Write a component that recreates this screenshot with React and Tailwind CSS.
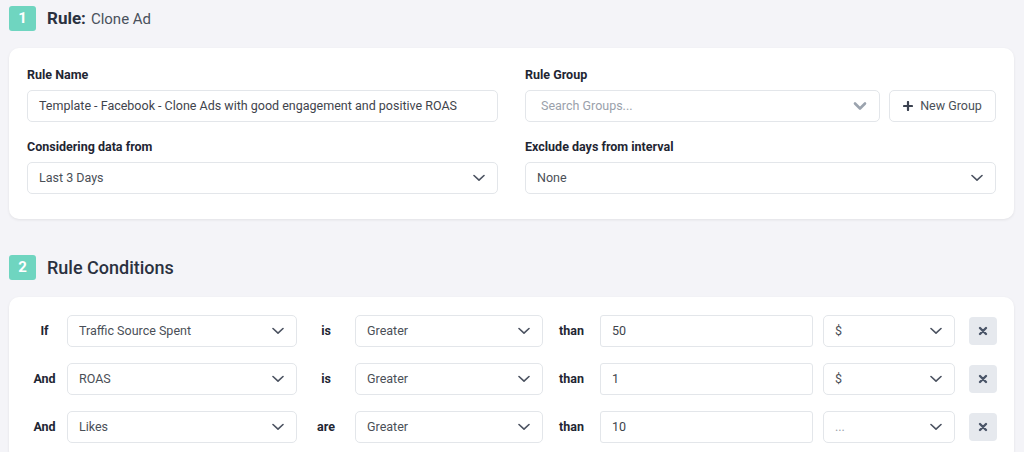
import React from "react";

const conditions = [
    { join: "If", field: "Traffic Source Spent", verb: "is", op: "Greater", value: "50", unit: "$" },
    { join: "And", field: "ROAS", verb: "is", op: "Greater", value: "1", unit: "$" },
    { join: "And", field: "Likes", verb: "are", op: "Greater", value: "10", unit: "..." },
];

function Badge({ n }) {
    return (
        <div className="w-[27px] h-[25px] rounded-[3px] bg-[#6fd5c0] text-white font-bold text-[15px] flex items-center justify-center">
            {n}
        </div>
    );
}

function Chevron({ heavy }) {
    if (heavy) {
        return (
            <svg width="14" height="10" viewBox="0 0 14 10" fill="none">
                <path d="M2 2.5L7 7.5L12 2.5" stroke="#9ba3ae" strokeWidth="2.6" strokeLinecap="round" strokeLinejoin="round" />
            </svg>
        );
    }
    return (
        <svg width="12" height="8" viewBox="0 0 12 8" fill="none">
            <path d="M1 1.5L6 6.2L11 1.5" stroke="#4b5260" strokeWidth="1.6" strokeLinecap="round" strokeLinejoin="round" />
        </svg>
    );
}

function Select({ value, className = "", muted = false, heavy = false }) {
    return (
        <div className={`h-[32px] bg-white border border-[#e3e6ea] rounded-[5px] flex items-center justify-between pl-[11px] pr-[12px] ${className}`}>
            <span className={`text-[12.5px] ${muted ? "text-[#9aa1ab]" : "text-[#4a4f57]"}`}>{value}</span>
            <Chevron heavy={heavy} />
        </div>
    );
}

function Field({ label, children }) {
    return (
        <div>
            <div className="text-[12.5px] font-bold text-[#1f2633] leading-[16px] mb-[7px]">{label}</div>
            {children}
        </div>
    );
}

export default function App() {
    return (
        <div className="min-h-[452px] bg-[#f4f4f8] pl-[9px] pr-[10px] pt-[6px] overflow-hidden" style={{ fontFamily: "Roboto, 'Liberation Sans', sans-serif" }}>
            <div className="flex items-center gap-[11px] h-[25px]">
                <Badge n="1" />
                <div className="text-[#2a3140]">
                    <span className="font-bold text-[17px]">Rule:</span>
                    <span className="text-[15px] text-[#4a515c] ml-[5px]">Clone Ad</span>
                </div>
            </div>

            <div className="mt-[17px] bg-white rounded-[10px] shadow-[0_1px_3px_rgba(0,0,0,0.08)] px-[18px] pt-[19px] pb-[25px] grid grid-cols-2 gap-x-[27px] gap-y-[17px]">
                <Field label="Rule Name">
                    <div className="h-[32px] border border-[#e3e6ea] rounded-[5px] flex items-center px-[11px] text-[12.5px] text-[#3f444c]">
                        Template - Facebook - Clone Ads with good engagement and positive ROAS
                    </div>
                </Field>
                <Field label="Rule Group">
                    <div className="flex gap-[9px]">
                        <Select value="Search Groups..." muted heavy className="flex-1 pl-[15px]" />
                        <button className="h-[32px] w-[107px] border border-[#e3e6ea] rounded-[5px] flex items-center justify-center gap-[7px] text-[12.5px] text-[#4a4f57]">
                            <svg width="10" height="10" viewBox="0 0 10 10">
                                <path d="M5 1V9M1 5H9" stroke="#3b4250" strokeWidth="2.2" strokeLinecap="round" />
                            </svg>
                            New Group
                        </button>
                    </div>
                </Field>
                <Field label="Considering data from">
                    <Select value="Last 3 Days" />
                </Field>
                <Field label="Exclude days from interval">
                    <Select value="None" />
                </Field>
            </div>

            <div className="mt-[36px] flex items-center gap-[11px] h-[25px]">
                <Badge n="2" />
                <span className="text-[18px] font-medium text-[#2a3140]">Rule Conditions</span>
            </div>

            <div className="mt-[17px] bg-white rounded-[10px] shadow-[0_1px_3px_rgba(0,0,0,0.08)] pl-[18px] pr-[17px] pt-[18px] pb-[18px] flex flex-col gap-[16px]">
                {conditions.map((c, i) => (
                    <div key={i} className="flex items-center">
                        <div className="w-[35px] text-center text-[12.5px] font-bold text-[#1f2633]">{c.join}</div>
                        <Select value={c.field} className="ml-[5px] w-[230px]" />
                        <div className="w-[58px] text-center text-[12.5px] font-bold text-[#1f2633]">{c.verb}</div>
                        <Select value={c.op} className="w-[188px]" />
                        <div className="w-[57px] text-center text-[12.5px] font-bold text-[#1f2633]">than</div>
                        <div className="w-[213px] h-[32px] border border-[#e3e6ea] rounded-[3px] flex items-center px-[11px] text-[12.5px] text-[#3f444c]">
                            {c.value}
                        </div>
                        <Select value={c.unit} muted={c.unit === "..."} className="ml-[10px] w-[132px]" />
                        <button className="ml-[14px] w-[28px] h-[28px] rounded-[4px] bg-[#e6e9ee] flex items-center justify-center">
                            <svg width="10" height="10" viewBox="0 0 10 10">
                                <path d="M2 2L8 8M8 2L2 8" stroke="#4a5568" strokeWidth="2.4" strokeLinecap="round" />
                            </svg>
                        </button>
                    </div>
                ))}
            </div>
        </div>
    );
}
